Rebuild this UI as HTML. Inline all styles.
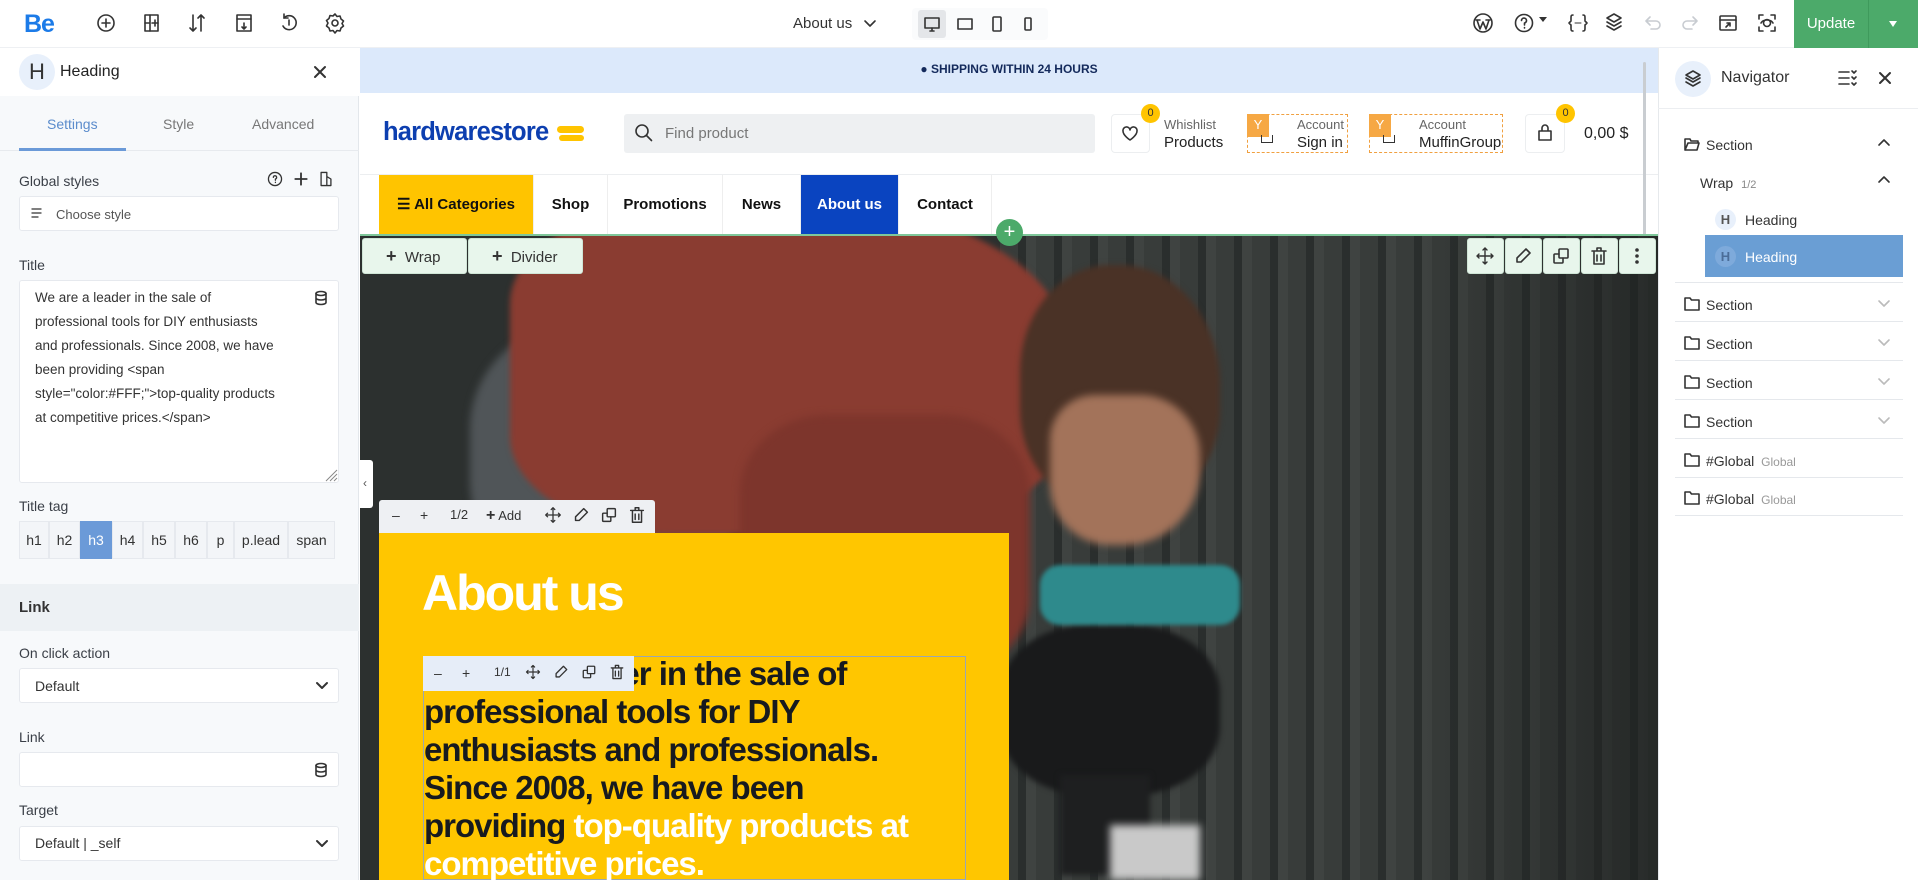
<!DOCTYPE html>
<html><head><meta charset="utf-8"><style>
*{box-sizing:border-box;margin:0;padding:0}
body{width:1918px;height:880px;overflow:hidden;font-family:"Liberation Sans",sans-serif;background:#fff;position:relative;color:#333}
.a{position:absolute}
.ic{position:absolute;width:22px;height:22px;fill:none;stroke:#333;stroke-width:1.6;stroke-linecap:round;stroke-linejoin:round}
.lbl{position:absolute;font-size:14px;color:#3a3f47}
.inp{position:absolute;left:19px;width:320px;background:#fff;border:1px solid #e6e9ee;border-radius:3px}
.tag{position:absolute;top:521px;height:38px;border:1px solid #e6e9ee;background:#f3f5f8;font-size:14px;color:#333;text-align:center;line-height:36px}
.nav{position:absolute;top:175px;height:60px;line-height:60px;font-size:15px;font-weight:bold;color:#111;text-align:center;border-right:1px solid #eee}
.ni{position:absolute;left:1706px;font-size:14px;color:#333}
.nl{position:absolute;left:1675px;width:228px;height:1px;background:#e5e8ec}
.tb{position:absolute;background:#e8f6ec;border:1px solid #cfe5d6;border-radius:3px}
</style></head><body>

<!-- top bar -->
<div class="a" style="left:0;top:0;width:1918px;height:48px;background:#fff;border-bottom:1px solid #eef0f3"></div>
<div class="a" style="left:24px;top:10px;font-size:25px;font-weight:bold;color:#1c7be8;letter-spacing:-1px">Be</div>
<svg class="ic" style="left:95px;top:12px" viewBox="0 0 22 22"><circle cx="11" cy="11" r="8"/><path d="M11 7v8M7 11h8"/></svg>
<svg class="ic" style="left:141px;top:12px" viewBox="0 0 22 22"><rect x="4" y="3" width="13" height="16"/><path d="M9 3v16M4 11h5M14 8v6M11 11h6"/></svg>
<svg class="ic" style="left:186px;top:12px" viewBox="0 0 22 22"><path d="M7 3v16M4 16l3 3 3-3M15 19V3M12 6l3-3 3 3"/></svg>
<svg class="ic" style="left:233px;top:12px" viewBox="0 0 22 22"><rect x="4" y="3" width="14" height="16"/><path d="M4 7h14M11 11v6M9 15l2 2 2-2"/></svg>
<svg class="ic" style="left:278px;top:12px" viewBox="0 0 22 22"><path d="M6 6a7 7 0 1 1-1 8"/><path d="M6 2v4h4M11 8v5"/></svg>
<svg class="ic" style="left:324px;top:12px" viewBox="0 0 22 22"><circle cx="11" cy="11" r="3"/><path d="M11 2l2 2.5 3-.5 1 3 2.5 2-1.5 2.5 1.5 2.5-2.5 2-1 3-3-.5-2 2.5-2-2.5-3 .5-1-3L2.5 14 4 11 2.5 8.5 5 6.5l1-3 3 .5z"/></svg>
<div class="a" style="left:793px;top:15px;font-size:15px;color:#333">About us</div>
<svg class="ic" style="left:862px;top:13px;width:16px;height:20px" viewBox="0 0 16 20"><path d="M3 8l5 5 5-5"/></svg>
<div class="a" style="left:912px;top:8px;width:136px;height:32px;background:#fafbfc;border-radius:4px"></div>
<div class="a" style="left:918px;top:10px;width:28px;height:28px;background:#e4e6e9;border-radius:3px"></div>
<svg class="ic" style="left:921px;top:13px" viewBox="0 0 22 22"><rect x="4" y="5" width="14" height="10"/><path d="M9 18h4M11 15v3"/></svg>
<svg class="ic" style="left:954px;top:13px" viewBox="0 0 22 22"><rect x="4" y="6" width="14" height="10"/></svg>
<svg class="ic" style="left:986px;top:13px" viewBox="0 0 22 22"><rect x="7" y="4" width="8" height="14" rx="1"/></svg>
<svg class="ic" style="left:1017px;top:13px" viewBox="0 0 22 22"><rect x="8" y="5" width="6" height="12" rx="1"/></svg>
<svg class="ic" style="left:1472px;top:12px" viewBox="0 0 22 22"><circle cx="11" cy="11" r="9"/><path d="M5 8l3 9 3-7 3 7 3-9M4 8h4M14 8h4"/></svg>
<svg class="ic" style="left:1513px;top:12px" viewBox="0 0 22 22"><circle cx="11" cy="11" r="8.5"/><path d="M8.5 8.5a2.5 2.5 0 1 1 3 2.5v2M11.5 15.5v.5"/></svg>
<div class="a" style="left:1539px;top:17px;width:0;height:0;border-left:4px solid transparent;border-right:4px solid transparent;border-top:5px solid #333"></div>
<svg class="ic" style="left:1567px;top:12px" viewBox="0 0 22 22"><path d="M6 3c-2 0-2 1-2 3v3l-2 2 2 2v3c0 2 0 3 2 3M16 3c2 0 2 1 2 3v3l2 2-2 2v3c0 2 0 3-2 3"/><path d="M8 11h6" stroke-width="1"/></svg>
<svg class="ic" style="left:1603px;top:12px" viewBox="0 0 22 22"><path d="M11 2l7 4-7 4-7-4zM4 10l7 4 7-4M4 14l7 4 7-4"/></svg>
<svg class="ic" style="left:1642px;top:12px;stroke:#c8ccd1" viewBox="0 0 22 22"><path d="M5 9h9a4 4 0 0 1 0 8H9M8 5L4 9l4 4"/></svg>
<svg class="ic" style="left:1679px;top:12px;stroke:#c8ccd1" viewBox="0 0 22 22"><path d="M17 9H8a4 4 0 0 0 0 8h5M14 5l4 4-4 4"/></svg>
<svg class="ic" style="left:1717px;top:12px" viewBox="0 0 22 22"><rect x="3" y="4" width="16" height="14" rx="1"/><path d="M3 8h16M9 15l4-4M10 11h3v3"/></svg>
<svg class="ic" style="left:1756px;top:12px" viewBox="0 0 22 22"><path d="M3 7V3h4M15 3h4v4M19 15v4h-4M7 19H3v-4"/><circle cx="11" cy="11" r="3.5"/><path d="M5 11c2-4 10-4 12 0"/></svg>
<div class="a" style="left:1794px;top:0;width:124px;height:48px;background:#4caa6a"></div>
<div class="a" style="left:1868px;top:0;width:1px;height:48px;background:#3f9a5c"></div>
<div class="a" style="left:1794px;top:15px;width:74px;text-align:center;color:#fff;font-size:15px">Update</div>
<div class="a" style="left:1889px;top:21px;width:0;height:0;border-left:4px solid transparent;border-right:4px solid transparent;border-top:6px solid #fff"></div>

<!-- left panel -->
<div class="a" style="left:0;top:48px;width:359px;height:832px;background:#f7f9fb;border-right:1px solid #e3e7eb"></div>
<div class="a" style="left:0;top:48px;width:359px;height:48px;background:#fff"></div>
<div class="a" style="left:19px;top:54px;width:36px;height:36px;border-radius:50%;background:#e8f0fb;text-align:center;line-height:36px;font-size:22px;color:#333">H</div>
<div class="a" style="left:60px;top:63px;font-size:16px;color:#222">Heading</div>
<svg class="ic" style="left:309px;top:61px" viewBox="0 0 22 22"><path d="M6 6l10 10M16 6L6 16" stroke-width="2"/></svg>
<div class="a" style="left:47px;top:116px;font-size:14px;color:#5b8ccc">Settings</div>
<div class="a" style="left:163px;top:116px;font-size:14px;color:#777">Style</div>
<div class="a" style="left:252px;top:116px;font-size:14px;color:#777">Advanced</div>
<div class="a" style="left:0;top:150px;width:359px;height:1px;background:#e7eaee"></div>
<div class="a" style="left:19px;top:148px;width:107px;height:3px;background:#6b9ad8"></div>
<div class="lbl" style="left:19px;top:173px">Global styles</div>
<svg class="ic" style="left:266px;top:170px;width:18px;height:18px" viewBox="0 0 22 22"><circle cx="11" cy="11" r="8"/><path d="M9 9a2 2 0 1 1 2.5 2v1.5M11.5 15v.3"/></svg>
<svg class="ic" style="left:292px;top:170px;width:18px;height:18px" viewBox="0 0 22 22"><path d="M11 4v14M4 11h14" stroke-width="2.2"/></svg>
<svg class="ic" style="left:317px;top:170px;width:18px;height:18px" viewBox="0 0 22 22"><path d="M5 3h7v16H5zM12 8l5 3v8h-5"/></svg>
<div class="inp" style="top:196px;height:35px"></div>
<svg class="ic" style="left:29px;top:204px;width:16px;height:18px" viewBox="0 0 16 18"><path d="M3 5h9M3 9h9M3 13h6" stroke-width="1.3"/></svg>
<div class="a" style="left:56px;top:207px;font-size:13px;color:#555">Choose style</div>
<div class="lbl" style="left:19px;top:257px">Title</div>
<div class="inp" style="top:280px;height:203px"></div>
<div class="a" style="left:35px;top:286px;white-space:nowrap;font-size:13.5px;line-height:24px;color:#333">We are a leader in the sale of<br>professional tools for DIY enthusiasts<br>and professionals. Since 2008, we have<br>been providing &lt;span<br>style="color:#FFF;"&gt;top-quality products<br>at competitive prices.&lt;/span&gt;</div>
<svg class="ic" style="left:312px;top:289px;width:18px;height:18px" viewBox="0 0 18 18"><ellipse cx="9" cy="4.5" rx="5" ry="2"/><path d="M4 4.5v9c0 1 2 2 5 2s5-1 5-2v-9M4 9c0 1 2 2 5 2s5-1 5-2"/></svg>
<svg class="a" style="left:324px;top:468px" width="14" height="14"><path d="M13 2L2 13M13 6L6 13M13 10l-3 3" stroke="#888" stroke-width="1"/></svg>
<div class="lbl" style="left:19px;top:498px">Title tag</div>
<div class="tag" style="left:19px;width:30px">h1</div>
<div class="tag" style="left:49px;width:31px">h2</div>
<div class="tag" style="left:80px;width:32px;background:#6b9ad8;color:#fff;border-color:#6b9ad8">h3</div>
<div class="tag" style="left:112px;width:31px">h4</div>
<div class="tag" style="left:143px;width:32px">h5</div>
<div class="tag" style="left:175px;width:32px">h6</div>
<div class="tag" style="left:207px;width:27px">p</div>
<div class="tag" style="left:234px;width:54px">p.lead</div>
<div class="tag" style="left:288px;width:47px">span</div>
<div class="a" style="left:0;top:584px;width:359px;height:47px;background:#edf1f4"></div>
<div class="a" style="left:19px;top:599px;font-size:15px;font-weight:bold;color:#333">Link</div>
<div class="lbl" style="left:19px;top:645px">On click action</div>
<div class="inp" style="top:668px;height:35px"></div>
<div class="a" style="left:35px;top:678px;font-size:14px;color:#333">Default</div>
<svg class="ic" style="left:312px;top:675px;width:20px;height:20px" viewBox="0 0 20 20"><path d="M5 8l5 5 5-5" stroke-width="2"/></svg>
<div class="lbl" style="left:19px;top:729px">Link</div>
<div class="inp" style="top:752px;height:35px"></div>
<svg class="ic" style="left:312px;top:761px;width:18px;height:18px" viewBox="0 0 18 18"><ellipse cx="9" cy="4.5" rx="5" ry="2"/><path d="M4 4.5v9c0 1 2 2 5 2s5-1 5-2v-9M4 9c0 1 2 2 5 2s5-1 5-2"/></svg>
<div class="lbl" style="left:19px;top:802px">Target</div>
<div class="inp" style="top:826px;height:35px"></div>
<div class="a" style="left:35px;top:835px;font-size:14px;color:#333">Default | _self</div>
<svg class="ic" style="left:312px;top:833px;width:20px;height:20px" viewBox="0 0 20 20"><path d="M5 8l5 5 5-5" stroke-width="2"/></svg>

<!-- canvas -->
<div class="a" style="left:360px;top:48px;width:1298px;height:45px;background:#dce9fb"></div>
<div class="a" style="left:360px;top:62px;width:1298px;text-align:center;font-size:12px;font-weight:bold;color:#142a5c">● SHIPPING WITHIN 24 HOURS</div>
<div class="a" style="left:383px;top:118px;font-size:25.5px;font-weight:bold;color:#0d3fb0;letter-spacing:-0.8px">hardwarestore</div>
<div class="a" style="left:557px;top:126px;width:27px;height:7px;background:#ffc400;border-radius:4px"></div>
<div class="a" style="left:559px;top:135px;width:25px;height:6px;background:#ffc400;border-radius:3px"></div>
<div class="a" style="left:624px;top:114px;width:471px;height:39px;background:#eef0f2;border-radius:3px"></div>
<svg class="ic" style="left:633px;top:122px" viewBox="0 0 22 22"><circle cx="9" cy="9" r="6"/><path d="M13.5 13.5l5 5"/></svg>
<div class="a" style="left:665px;top:125px;font-size:15px;color:#777">Find product</div>
<div class="a" style="left:1111px;top:114px;width:39px;height:39px;border:1px solid #eceef0;border-radius:4px"></div>
<svg class="ic" style="left:1119px;top:122px" viewBox="0 0 22 22"><path d="M11 18s-7-4.5-7-9a3.5 3.5 0 0 1 7-1 3.5 3.5 0 0 1 7 1c0 4.5-7 9-7 9z"/></svg>
<div class="a" style="left:1141px;top:104px;width:19px;height:19px;border-radius:50%;background:#ffc400;font-size:11px;text-align:center;line-height:19px;color:#333">0</div>
<div class="a" style="left:1164px;top:117px;font-size:13px;color:#666">Whishlist</div>
<div class="a" style="left:1164px;top:134px;font-size:15px;color:#222">Products</div>
<div class="a" style="left:1247px;top:114px;width:101px;height:39px;border:1.5px dashed #f0a040"></div>
<div class="a" style="left:1247px;top:114px;width:22px;height:23px;background:#f6a844;color:#fff;font-size:13px;text-align:center;line-height:22px">Y</div>
<div class="a" style="left:1261px;top:135px;width:12px;height:8px;border:1.5px solid #333;border-top:none"></div>
<div class="a" style="left:1297px;top:117px;font-size:13px;color:#666">Account</div>
<div class="a" style="left:1297px;top:134px;font-size:15px;color:#222">Sign in</div>
<div class="a" style="left:1369px;top:114px;width:134px;height:39px;border:1.5px dashed #f0a040"></div>
<div class="a" style="left:1369px;top:114px;width:22px;height:23px;background:#f6a844;color:#fff;font-size:13px;text-align:center;line-height:22px">Y</div>
<div class="a" style="left:1383px;top:135px;width:12px;height:8px;border:1.5px solid #333;border-top:none"></div>
<div class="a" style="left:1419px;top:117px;font-size:13px;color:#666">Account</div>
<div class="a" style="left:1419px;top:134px;font-size:15px;color:#222">MuffinGroup</div>
<div class="a" style="left:1525px;top:114px;width:40px;height:39px;border:1px solid #eceef0;border-radius:4px"></div>
<svg class="ic" style="left:1534px;top:122px" viewBox="0 0 22 22"><path d="M5 9h12v9H5zM8 9V6a3 3 0 0 1 6 0v3"/></svg>
<div class="a" style="left:1556px;top:104px;width:19px;height:19px;border-radius:50%;background:#ffc400;font-size:11px;text-align:center;line-height:19px;color:#333">0</div>
<div class="a" style="left:1584px;top:125px;font-size:16px;color:#222">0,00 $</div>
<div class="a" style="left:360px;top:174px;width:1298px;height:1px;background:#eceef0"></div>
<div class="nav" style="left:379px;width:155px;background:#ffc400">☰ All Categories</div>
<div class="nav" style="left:534px;width:74px">Shop</div>
<div class="nav" style="left:608px;width:115px">Promotions</div>
<div class="nav" style="left:723px;width:78px">News</div>
<div class="nav" style="left:801px;width:98px;background:#0a44c0;color:#fff">About us</div>
<div class="nav" style="left:899px;width:93px">Contact</div>
<div class="a" style="left:1643px;top:62px;width:3px;height:220px;background:#c9cdd1;border-radius:2px"></div>

<!-- hero -->
<div class="a" style="left:360px;top:235px;width:1298px;height:645px;overflow:hidden;background:#2c302f">
  <div class="a" style="left:640px;top:0;width:660px;height:645px;background:repeating-linear-gradient(90deg,#383c3a 0 18px,#2a2e2d 18px 26px,#3f4341 26px 36px)"></div>
  <div class="a" style="left:1050px;top:0;width:250px;height:645px;background:linear-gradient(90deg,rgba(40,44,43,0),rgba(30,33,32,.7))"></div>
  <div class="a" style="left:110px;top:90px;width:260px;height:260px;background:#505558;border-radius:40% 30% 20% 40%;filter:blur(4px)"></div>
  <div class="a" style="left:150px;top:-30px;width:560px;height:330px;background:#8a3c31;border-radius:30% 45% 35% 30%;filter:blur(3px)"></div>
  <div class="a" style="left:380px;top:180px;width:290px;height:260px;background:#7d352c;border-radius:30%;filter:blur(4px)"></div>
  <div class="a" style="left:660px;top:30px;width:200px;height:240px;background:#4a3226;border-radius:45% 50% 40% 40%;filter:blur(3px)"></div>
  <div class="a" style="left:690px;top:160px;width:150px;height:150px;background:#a3735a;border-radius:30% 40% 50% 40%;filter:blur(4px)"></div>
  <div class="a" style="left:640px;top:390px;width:220px;height:170px;background:#191a1b;border-radius:40%;filter:blur(3px)"></div>
  <div class="a" style="left:680px;top:330px;width:200px;height:60px;background:#2e8a8c;border-radius:20px;filter:blur(2px)"></div>
  <div class="a" style="left:700px;top:540px;width:90px;height:100px;background:#1e1f20;filter:blur(3px)"></div>
  <div class="a" style="left:750px;top:590px;width:90px;height:55px;background:#c9c9c9;filter:blur(4px)"></div>
</div>
<div class="a" style="left:360px;top:234px;width:1298px;height:2px;background:#7fc79a"></div>
<div class="a" style="left:360px;top:460px;width:13px;height:48px;background:#fff;border-radius:0 3px 3px 0"></div>
<div class="a" style="left:363px;top:476px;font-size:12px;color:#555">‹</div>
<div class="tb" style="left:362px;top:238px;width:105px;height:36px"></div>
<div class="a" style="left:386px;top:246px;font-size:15px;color:#333"><b style="font-size:18px">+</b>&nbsp; Wrap</div>
<div class="tb" style="left:468px;top:238px;width:115px;height:36px"></div>
<div class="a" style="left:492px;top:246px;font-size:15px;color:#333"><b style="font-size:18px">+</b>&nbsp; Divider</div>
<div class="a" style="left:996px;top:219px;width:27px;height:27px;border-radius:50%;background:#4caa6a;color:#fff;text-align:center;line-height:26px;font-size:20px">+</div>
<div class="tb" style="left:1467px;top:238px;width:37px;height:36px"></div>
<div class="tb" style="left:1505px;top:238px;width:37px;height:36px"></div>
<div class="tb" style="left:1543px;top:238px;width:37px;height:36px"></div>
<div class="tb" style="left:1581px;top:238px;width:37px;height:36px"></div>
<div class="tb" style="left:1619px;top:238px;width:37px;height:36px"></div>
<svg class="ic" style="left:1474px;top:245px" viewBox="0 0 22 22"><path d="M11 3v16M3 11h16M9 5l2-2 2 2M9 17l2 2 2-2M5 9l-2 2 2 2M17 9l2 2-2 2" stroke-width="1.4"/></svg>
<svg class="ic" style="left:1512px;top:245px" viewBox="0 0 22 22"><path d="M14 4l4 4-9 9H5v-4z"/></svg>
<svg class="ic" style="left:1550px;top:245px" viewBox="0 0 22 22"><rect x="9" y="4" width="9" height="9" rx="1"/><path d="M13 13v4a1 1 0 0 1-1 1H5a1 1 0 0 1-1-1v-7a1 1 0 0 1 1-1h4"/></svg>
<svg class="ic" style="left:1588px;top:245px" viewBox="0 0 22 22"><path d="M4 6h14M9 6V3h4v3M6 6v13h10V6M9 10v6M13 10v6"/></svg>
<svg class="ic" style="left:1626px;top:245px" viewBox="0 0 22 22"><circle cx="11" cy="5" r="1" fill="#333"/><circle cx="11" cy="11" r="1" fill="#333"/><circle cx="11" cy="17" r="1" fill="#333"/></svg>

<!-- section toolbar -->
<div class="a" style="left:379px;top:500px;width:276px;height:33px;background:#eef0f3;border-radius:3px 3px 0 0"></div>
<div class="a" style="left:392px;top:507px;font-size:14px;color:#333;word-spacing:0">
<span style="position:absolute;left:0">–</span><span style="position:absolute;left:28px">+</span><span style="position:absolute;left:58px;font-size:13px">1/2</span><span style="position:absolute;left:94px;white-space:nowrap;font-size:13px"><b style="font-size:16px">+</b> Add</span></div>
<svg class="ic" style="left:543px;top:505px;width:20px;height:20px" viewBox="0 0 22 22"><path d="M11 3v16M3 11h16M9 5l2-2 2 2M9 17l2 2 2-2M5 9l-2 2 2 2M17 9l2 2-2 2" stroke-width="1.4"/></svg>
<svg class="ic" style="left:571px;top:505px;width:20px;height:20px" viewBox="0 0 22 22"><path d="M14 4l4 4-9 9H5v-4z"/></svg>
<svg class="ic" style="left:599px;top:505px;width:20px;height:20px" viewBox="0 0 22 22"><rect x="9" y="4" width="9" height="9" rx="1"/><path d="M13 13v4a1 1 0 0 1-1 1H5a1 1 0 0 1-1-1v-7a1 1 0 0 1 1-1h4"/></svg>
<svg class="ic" style="left:627px;top:505px;width:20px;height:20px" viewBox="0 0 22 22"><path d="M4 6h14M9 6V3h4v3M6 6v13h10V6M9 10v6M13 10v6"/></svg>

<!-- yellow box -->
<div class="a" style="left:379px;top:533px;width:630px;height:347px;background:#ffc600"></div>
<div class="a" style="left:422px;top:564px;font-size:50px;font-weight:bold;color:#fff;letter-spacing:-2px">About us</div>
<div class="a" style="left:423px;top:656px;width:543px;height:224px;border:1px solid #9aa7b3"></div>
<div class="a" style="left:424px;top:655px;white-space:nowrap;font-size:33px;line-height:38px;font-weight:bold;color:#171a1f;letter-spacing:-1px">We are a leader in the sale of<br>professional tools for DIY<br>enthusiasts and professionals.<br>Since 2008, we have been<br>providing <span style="color:#fff">top-quality products at<br>competitive prices.</span></div>
<div class="a" style="left:423px;top:656px;width:211px;height:35px;background:#e6edf8"></div>
<div class="a" style="left:434px;top:665px;font-size:14px;color:#333">
<span style="position:absolute;left:0">–</span><span style="position:absolute;left:28px">+</span><span style="position:absolute;left:60px;font-size:12px">1/1</span></div>
<svg class="ic" style="left:524px;top:663px;width:18px;height:18px" viewBox="0 0 22 22"><path d="M11 3v16M3 11h16M9 5l2-2 2 2M9 17l2 2 2-2M5 9l-2 2 2 2M17 9l2 2-2 2" stroke-width="1.4"/></svg>
<svg class="ic" style="left:552px;top:663px;width:18px;height:18px" viewBox="0 0 22 22"><path d="M14 4l4 4-9 9H5v-4z"/></svg>
<svg class="ic" style="left:580px;top:663px;width:18px;height:18px" viewBox="0 0 22 22"><rect x="9" y="4" width="9" height="9" rx="1"/><path d="M13 13v4a1 1 0 0 1-1 1H5a1 1 0 0 1-1-1v-7a1 1 0 0 1 1-1h4"/></svg>
<svg class="ic" style="left:608px;top:663px;width:18px;height:18px" viewBox="0 0 22 22"><path d="M4 6h14M9 6V3h4v3M6 6v13h10V6M9 10v6M13 10v6"/></svg>

<!-- navigator -->
<div class="a" style="left:1658px;top:48px;width:260px;height:832px;background:#fff;border-left:1px solid #e6e9ec"></div>
<div class="a" style="left:1675px;top:61px;width:36px;height:36px;border-radius:50%;background:#e8f0fb"></div>
<svg class="ic" style="left:1682px;top:68px" viewBox="0 0 22 22"><path d="M11 3l7 4-7 4-7-4zM4 10l7 4 7-4M4 14l7 4 7-4"/></svg>
<div class="a" style="left:1721px;top:69px;font-size:16px;color:#333">Navigator</div>
<svg class="ic" style="left:1836px;top:67px" viewBox="0 0 22 22"><path d="M3 5h10M3 11h10M3 17h10M16 4l2 2 2-2M16 10l2 2 2-2M16 16l2 2 2-2"/></svg>
<svg class="ic" style="left:1874px;top:67px" viewBox="0 0 22 22"><path d="M6 6l10 10M16 6L6 16" stroke-width="2"/></svg>
<div class="a" style="left:1658px;top:108px;width:260px;height:1px;background:#eceef1"></div>
<svg class="ic" style="left:1683px;top:135px;width:18px;height:18px" viewBox="0 0 18 18"><path d="M2 4h5l1 2h7v2M2 4v11h12l2-7H5l-3 7"/></svg>
<div class="ni" style="top:137px">Section</div>
<svg class="ic" style="left:1876px;top:135px;width:16px;height:16px" viewBox="0 0 16 16"><path d="M3 10l5-5 5 5"/></svg>
<div class="a" style="left:1700px;top:175px;font-size:14px;color:#333">Wrap <span style="font-size:11px;color:#888;margin-left:4px">1/2</span></div>
<svg class="ic" style="left:1876px;top:172px;width:16px;height:16px" viewBox="0 0 16 16"><path d="M3 10l5-5 5 5"/></svg>
<div class="a" style="left:1715px;top:209px;width:21px;height:21px;border-radius:50%;background:#e8f0fb;text-align:center;line-height:21px;font-size:13px;font-weight:bold;color:#555">H</div>
<div class="a" style="left:1745px;top:212px;font-size:14px;color:#333">Heading</div>
<div class="a" style="left:1705px;top:235px;width:198px;height:42px;background:#6a9ed4"></div>
<div class="a" style="left:1715px;top:246px;width:21px;height:21px;border-radius:50%;background:#7eaadb;text-align:center;line-height:21px;font-size:13px;font-weight:bold;color:#4b6d98">H</div>
<div class="a" style="left:1745px;top:249px;font-size:14px;color:#fff">Heading</div>
<div class="nl" style="top:282px"></div>
<svg class="ic" style="left:1683px;top:295px;width:18px;height:18px" viewBox="0 0 18 18"><path d="M2 3h5l1.5 2H16v10H2z"/></svg>
<div class="ni" style="top:297px">Section</div>
<svg class="ic" style="left:1876px;top:295px;width:16px;height:16px;stroke:#bbb" viewBox="0 0 16 16"><path d="M3 6l5 5 5-5"/></svg>
<div class="nl" style="top:321px"></div>
<svg class="ic" style="left:1683px;top:334px;width:18px;height:18px" viewBox="0 0 18 18"><path d="M2 3h5l1.5 2H16v10H2z"/></svg>
<div class="ni" style="top:336px">Section</div>
<svg class="ic" style="left:1876px;top:334px;width:16px;height:16px;stroke:#bbb" viewBox="0 0 16 16"><path d="M3 6l5 5 5-5"/></svg>
<div class="nl" style="top:360px"></div>
<svg class="ic" style="left:1683px;top:373px;width:18px;height:18px" viewBox="0 0 18 18"><path d="M2 3h5l1.5 2H16v10H2z"/></svg>
<div class="ni" style="top:375px">Section</div>
<svg class="ic" style="left:1876px;top:373px;width:16px;height:16px;stroke:#bbb" viewBox="0 0 16 16"><path d="M3 6l5 5 5-5"/></svg>
<div class="nl" style="top:399px"></div>
<svg class="ic" style="left:1683px;top:412px;width:18px;height:18px" viewBox="0 0 18 18"><path d="M2 3h5l1.5 2H16v10H2z"/></svg>
<div class="ni" style="top:414px">Section</div>
<svg class="ic" style="left:1876px;top:412px;width:16px;height:16px;stroke:#bbb" viewBox="0 0 16 16"><path d="M3 6l5 5 5-5"/></svg>
<div class="nl" style="top:438px"></div>
<svg class="ic" style="left:1683px;top:451px;width:18px;height:18px" viewBox="0 0 18 18"><path d="M2 3h5l1.5 2H16v10H2z"/></svg>
<div class="ni" style="top:453px">#Global <span style="font-size:12px;color:#999;margin-left:3px">Global</span></div>
<div class="nl" style="top:477px"></div>
<svg class="ic" style="left:1683px;top:489px;width:18px;height:18px" viewBox="0 0 18 18"><path d="M2 3h5l1.5 2H16v10H2z"/></svg>
<div class="ni" style="top:491px">#Global <span style="font-size:12px;color:#999;margin-left:3px">Global</span></div>
<div class="nl" style="top:515px"></div>
</body></html>
